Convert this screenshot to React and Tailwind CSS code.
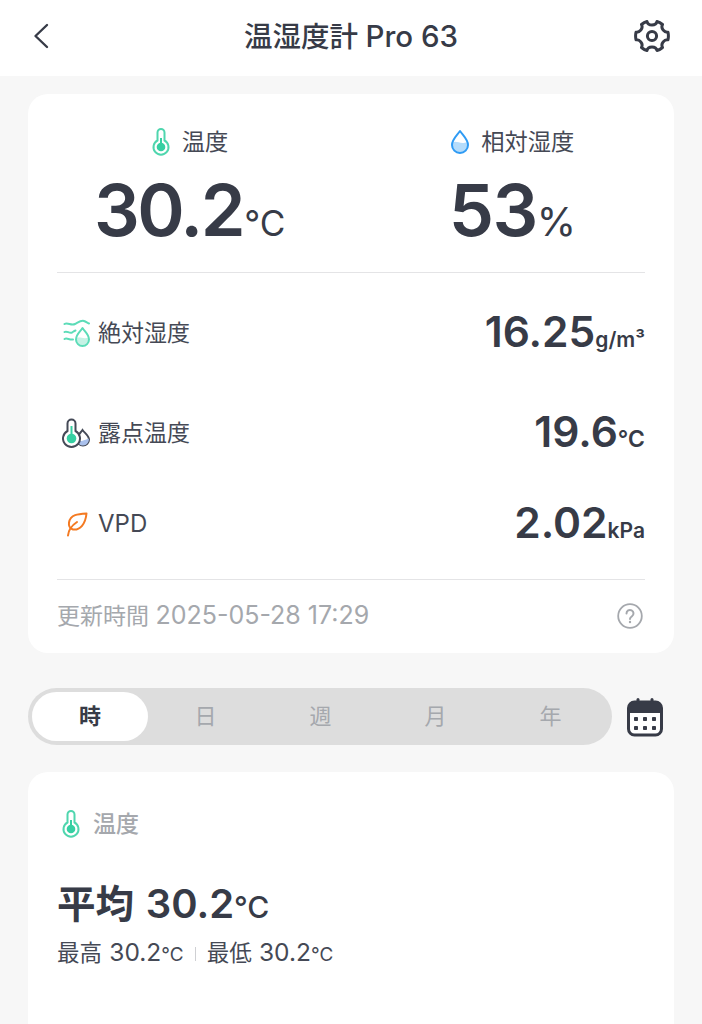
const FONT = "font-['Inter','Noto_Sans_CJK_JP',sans-serif]";

function BackIcon() {
    return (
        <svg width="18" height="26" viewBox="0 0 18 26" fill="none" stroke="#373b47" strokeWidth="2.4" strokeLinecap="round" strokeLinejoin="round">
            <path d="M15 2 L3.500 13 L15 24" />
        </svg>
    );
}

function GearIcon() {
    return (
        <svg width="36" height="36" viewBox="0 0 36 36" fill="none" stroke="#373b47" strokeWidth="3" strokeLinejoin="round">
            <path d="M13 3.500 C13.500 6 15.500 7 18 7 C20.500 7 22.500 6 23 3.500 C25 4 27 5.200 28.500 6.500 C27.500 8.500 27.800 10.500 29.300 12.200 C30.500 13.800 32 14.500 34 14.200 C34.500 16.500 34.500 19.500 34 21.800 C32 21.500 30.500 22.200 29.300 23.800 C27.800 25.500 27.500 27.500 28.500 29.500 C27 30.800 25 32 23 32.500 C22.500 30 20.500 29 18 29 C15.500 29 13.500 30 13 32.500 C11 32 9 30.800 7.500 29.500 C8.500 27.500 8.200 25.500 6.700 23.800 C5.500 22.200 4 21.500 2 21.800 C1.500 19.500 1.500 16.500 2 14.200 C4 14.500 5.500 13.800 6.700 12.200 C8.200 10.500 8.500 8.500 7.500 6.500 C9 5.200 11 4 13 3.500 Z" />
            <circle cx="18" cy="18" r="4.600" />
        </svg>
    );
}

function ThermoIcon() {
    return (
        <svg width="20" height="28" viewBox="0 0 20 28" fill="none">
            <path d="M6.500 4.500 a3.500 3.500 0 0 1 7 0 V12.500 a7.500 7.500 0 1 1 -7 0 Z" stroke="#4fd6ae" strokeWidth="2" />
            <circle cx="10" cy="19" r="4.300" fill="#36cfa2" />
            <rect x="9" y="10" width="2" height="8" fill="#36cfa2" />
        </svg>
    );
}

function DropIcon() {
    return (
        <svg width="20" height="26" viewBox="0 0 20 26" fill="none">
            <path d="M10 2 C7 6.500 2 10.500 2 16 a8 8 0 0 0 16 0 C18 10.500 13 6.500 10 2 Z" fill="#fff" />
            <path d="M2.500 13.500 C7 11 10 16 17.500 13 C18 14.500 18 15.500 18 16 a8 8 0 0 1 -16 0 C2 15.500 2.200 14.300 2.500 13.500 Z" fill="#b5dcfb" />
            <path d="M10 2 C7 6.500 2 10.500 2 16 a8 8 0 0 0 16 0 C18 10.500 13 6.500 10 2 Z" stroke="#2f9bf4" strokeWidth="2" strokeLinejoin="round" />
        </svg>
    );
}

function AbsHumidityIcon() {
    return (
        <svg width="28" height="28" viewBox="0 0 28 28" fill="none" stroke="#5cdcb8" strokeWidth="2" strokeLinecap="round">
            <path d="M2.500 5 C6 3 9 7 13 5 C16 3.500 19 1 22 2 C24 2.700 25.500 4 27 4.500" />
            <path d="M2.500 13 C5 11.500 7 14.500 10 13.500 C11 13 12 12 13.500 11.500" />
            <path d="M2.500 20 C5 18.500 7 21 11 20.500" />
            <path d="M14.500 19 C18 17.500 22 20.500 26.500 18.500 C27 20 27 21 26.500 22.500 a6.500 6.500 0 0 1 -12 0 C14.200 21.500 14.200 20 14.500 19 Z" fill="#c6f2e5" stroke="none" />
            <path d="M20.500 9 C18 13 14 15.500 14 20.500 a6.500 6.500 0 0 0 13 0 C27 15.500 23 13 20.500 9 Z" strokeLinejoin="round" />
        </svg>
    );
}

function DewIcon() {
    return (
        <svg width="28" height="30" viewBox="0 0 28 30" fill="none">
            <path d="M20.500 12 C18.500 15 15 17.500 15 21.500 a6 6 0 0 0 12 0 C27 17.500 22.500 15 20.500 12 Z" fill="#fff" stroke="#454a57" strokeWidth="2" />
            <path d="M15.500 23 C19 24 22.500 22 26.800 20.500 C27.500 24 24.500 27.500 21 27.500 C18 27.500 16 25.500 15.500 23 Z" fill="#a9c0ec" />
            <path d="M5.500 5.500 a4 4 0 0 1 8 0 V13 a8.500 8.500 0 1 1 -8 0 Z" fill="#fff" stroke="#454a57" strokeWidth="2" />
            <circle cx="9.500" cy="20.500" r="4.800" fill="#36cfa2" />
            <rect x="8.500" y="8" width="2" height="10" fill="#36cfa2" />
        </svg>
    );
}

function LeafIcon() {
    return (
        <svg width="28" height="28" viewBox="0 0 28 28" fill="none" stroke="#f47a22" strokeWidth="2" strokeLinecap="round" strokeLinejoin="round">
            <path d="M24.500 3.500 C16 4 8.500 4.500 7 12.500 C6.500 16 8 18.500 11 19.500 C18 20.500 23.500 14 24.500 3.500 Z" />
            <path d="M6 25.500 C6.500 20 9 16 15 12" />
        </svg>
    );
}

function HelpIcon() {
    return (
        <svg width="26" height="26" viewBox="0 0 26 26" fill="none">
            <circle cx="13" cy="13" r="11.800" stroke="#a5a8ad" strokeWidth="1.800" />
            <path d="M9.500 10.500 a3.500 3.500 0 1 1 5.500 2.800 C13.800 14.200 13 14.800 13 16" stroke="#a5a8ad" strokeWidth="2" strokeLinecap="round" />
            <circle cx="13" cy="19" r="1.200" fill="#a5a8ad" />
        </svg>
    );
}

function CalendarIcon() {
    return (
        <svg width="36" height="40" viewBox="0 0 36 40" fill="none">
            <rect x="1.500" y="5" width="33" height="33" rx="6" fill="#fff" stroke="#373b47" strokeWidth="3" />
            <path d="M1.500 16 V10 a5 5 0 0 1 5 -5 H29.500 a5 5 0 0 1 5 5 V16 Z" fill="#373b47" />
            <rect x="9.500" y="1" width="3" height="6" rx="1.500" fill="#373b47" />
            <rect x="23.500" y="1" width="3" height="6" rx="1.500" fill="#373b47" />
            {[9, 18, 27].map((x) =>
                [22, 31].map((y) => <rect key={x + "-" + y} x={x - 2} y={y - 2} width="4" height="4" rx="0.800" fill="#373b47" />)
            )}
        </svg>
    );
}

function Metric({ icon, label, value, valueClass, unit, unitClass }) {
    return (
        <div className="flex flex-col items-center">
            <div className="flex items-center gap-[11px] h-[28px]">
                {icon}
                <span className="text-[23.250px] leading-[28px] text-[#454955]">{label}</span>
            </div>
            <div className="flex items-baseline mt-[12px] h-[84px] text-[#373b47]">
                <span className={`text-[72px] leading-[84px] font-semibold ${valueClass}`}>{value}</span>
                <span className={`leading-[84px] ${unitClass}`}>{unit}</span>
            </div>
        </div>
    );
}

function Row({ icon, label, labelClass = "text-[23px]", value, unit, unitClass = "text-[21px]", className }) {
    return (
        <div className={`flex items-center justify-between ${className}`}>
            <div className="flex items-center">
                <div className="w-[41px] pl-[5px] flex items-center">{icon}</div>
                <span className={`leading-[28px] text-[#454955] ${labelClass}`}>{label}</span>
            </div>
            <div className="flex items-baseline pt-[6px] text-[#373b47]">
                <span className="text-[42.500px] leading-[50px] font-semibold">{value}</span>
                <span className={`leading-[50px] font-semibold ${unitClass}`}>{unit}</span>
            </div>
        </div>
    );
}

const TABS = ["時", "日", "週", "月", "年"];

export default function App() {
    return (
        <div className={`${FONT} w-[702px] h-[1024px] overflow-hidden bg-[#f7f7f7]`}>
            {/* Header */}
            <header className="h-[76px] bg-white flex items-center justify-between px-[32px] pb-[4px]">
                <div className="w-[36px]">
                    <BackIcon />
                </div>
                <h1 className="font-medium text-[#373b47] leading-[40px] text-[28.500px]">
                    温湿度計 <span className="text-[29.500px]">Pro 63</span>
                </h1>
                <GearIcon />
            </header>

            {/* Current values */}
            <section className="mt-[18px] mx-[28px] h-[559px] bg-white rounded-[20px] px-[29px] pt-[34px]">
                <div className="flex justify-between pl-[37px] pr-[69px] h-[145px] border-b border-[#e4e4e6]">
                    <Metric icon={<ThermoIcon />} label="温度" value="30.2" valueClass="tracking-[-2.500px]" unit="℃" unitClass="text-[35px] ml-[1px]" />
                    <Metric icon={<DropIcon />} label="相対湿度" value="53" valueClass="tracking-[-1.500px]" unit="%" unitClass="text-[40px]" />
                </div>
                <Row className="mt-[28px]" icon={<AbsHumidityIcon />} label="絶対湿度" value="16.25" unit="g/m³" />
                <Row className="mt-[36px]" icon={<DewIcon />} label="露点温度" value="19.6" unit="℃" unitClass="text-[23px]" />
                <Row className="mt-[28px]" icon={<LeafIcon />} label="VPD" labelClass="text-[24px]" value="2.02" unit="kPa" />
                <div className="mt-[23px] border-t border-[#e4e4e6] pt-[21px] flex items-center justify-between">
                    <span className="text-[23px] leading-[28px] text-[#a5a8ad]">
                        更新時間 <span className="text-[25px]">2025-05-28 17:29</span>
                    </span>
                    <div className="mr-[2px]">
                        <HelpIcon />
                    </div>
                </div>
            </section>

            {/* Range tabs */}
            <div className="mt-[35px] mx-[28px] flex items-center justify-between">
                <div className="w-[584px] h-[57px] rounded-full bg-[#dddddd] p-[4px] flex">
                    {TABS.map((tab, i) => (
                        <div
                            key={tab}
                            className={`flex items-center justify-center text-[22px] rounded-full ${i === 0 ? "w-[116px] bg-white font-bold text-[#373b47]" : "w-[115px] text-[#a5a8ad]"}`}
                        >
                            {tab}
                        </div>
                    ))}
                </div>
                <div className="mr-[11px]">
                    <CalendarIcon />
                </div>
            </div>

            {/* Temperature summary */}
            <section className="mt-[27px] mx-[28px] h-[300px] bg-white rounded-[20px] px-[29px] pt-[36px]">
                <div className="flex items-center gap-[12px] pl-[4px]">
                    <ThermoIcon />
                    <span className="text-[23px] leading-[32px] font-medium text-[#a5a8ad]">温度</span>
                </div>
                <div className="mt-[39px] flex items-baseline text-[#373b47] font-semibold">
                    <span className="text-[38.500px] leading-[50px]">
                        平均 <span className="text-[40px] ml-[2px]">30.2</span>
                    </span>
                    <span className="text-[30px] leading-[50px] font-medium">℃</span>
                </div>
                <div className="mt-[5px] flex items-center text-[#454955]">
                    <span className="text-[22.500px] leading-[30px]">
                        最高 <span className="text-[24.500px] ml-[1px]">30.2</span><span className="text-[19px]">℃</span>
                    </span>
                    <span className="mx-[11px] w-px h-[14px] bg-[#cfd0d3]" />
                    <span className="text-[22.500px] leading-[30px]">
                        最低 <span className="text-[24.500px] ml-[1px]">30.2</span><span className="text-[19px]">℃</span>
                    </span>
                </div>
            </section>
        </div>
    );
}
